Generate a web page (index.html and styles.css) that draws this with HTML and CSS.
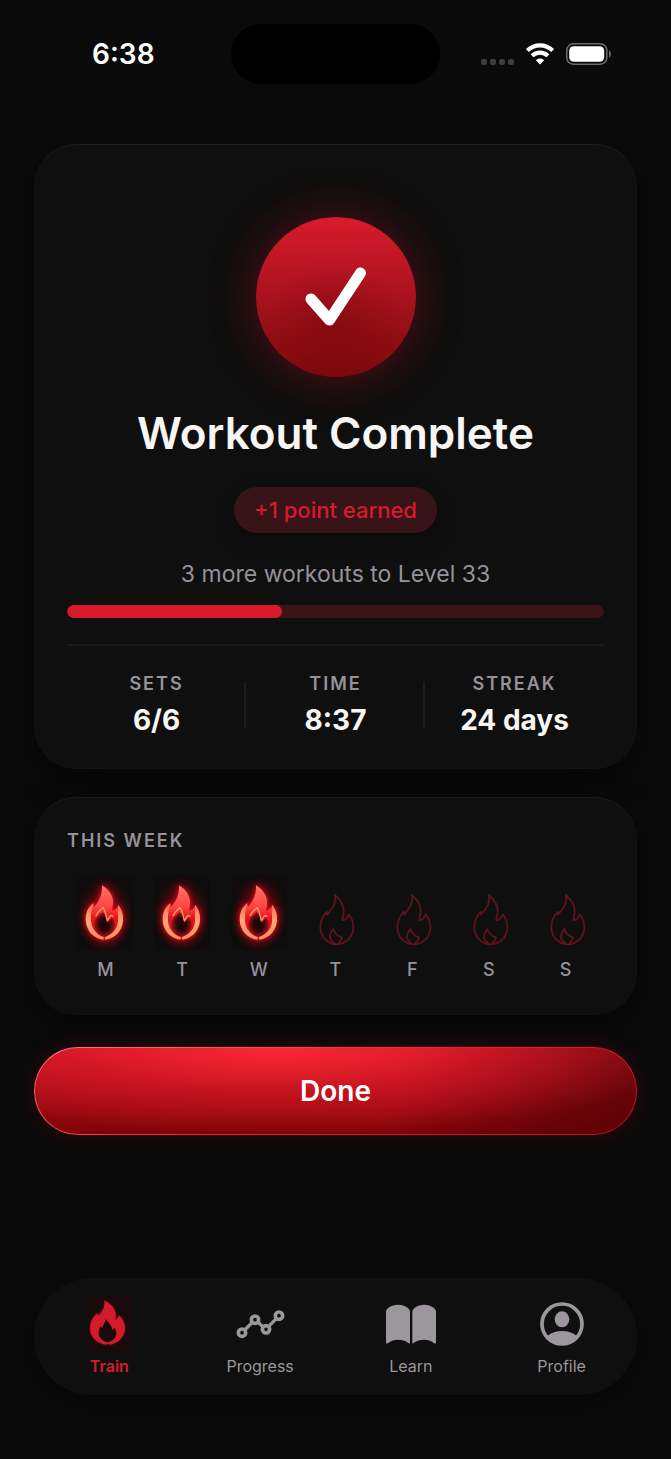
FILE: index.html
```
<!DOCTYPE html>
<html lang="en">
<head>
    <meta charset="UTF-8">
    <meta name="viewport" content="width=device-width, initial-scale=1.0">
    <title>Workout Complete</title>
    <link rel="stylesheet" href="styles.css">
</head>
<body>
    <!-- Shared flame shapes -->
    <svg class="sprite" aria-hidden="true">
        <defs>
            <linearGradient id="flame-fill" x1="0" y1="0" x2="0" y2="1">
                <stop offset="0" stop-color="#ff7466"/>
                <stop offset="0.4" stop-color="#fc4643"/>
                <stop offset="0.6" stop-color="#e3161d"/>
                <stop offset="1" stop-color="#c20d13"/>
            </linearGradient>
            <linearGradient id="flame-edge" x1="0" y1="0" x2="0" y2="1">
                <stop offset="0" stop-color="#ff6a52"/>
                <stop offset="0.5" stop-color="#ffa878"/>
                <stop offset="1" stop-color="#ff8a60"/>
            </linearGradient>
            <radialGradient id="flame-core">
                <stop offset="0" stop-color="#140607"/>
                <stop offset="0.5" stop-color="#2c0709"/>
                <stop offset="1" stop-color="#a01015"/>
            </radialGradient>
        </defs>
        <symbol id="flame-lit" viewBox="0 0 168 222">
            <path fill="url(#flame-fill)" d="M75 28 C95 40 112 62 108 86 C107 94 105 99 105 104 C115 103 122 96 124 87 C132 100 138 112 137 131 C136 164 112 187 82 190 C52 188 28 164 27 131 C27 110 35 94 49 82 L51 94 C62 80 77 62 75 28 Z"/>
            <path fill="url(#flame-core)" d="M76 108 C68 118 52 128 52 146 C52 164 64 177 82 183 C100 177 113 164 113 146 C113 136 109 129 104 126 L92 140 L86 116 Z"/>
            <path fill="url(#flame-edge)" d="M49 82 C33 94 26 110 26 131 C27 164 50 187 79 191 L81 184 C60 176 44 160 42 134 C41 114 44 100 49 82 Z"/>
            <path fill="url(#flame-edge)" d="M124 87 C133 100 139 112 138 131 C137 164 114 187 85 191 L83 184 C106 176 121 160 123 136 C124 118 121 106 124 87 Z"/>
            <path fill="none" stroke="#ff9a70" stroke-width="4" stroke-linecap="round" stroke-linejoin="round" d="M57 119 C62 106 72 102 78 95 L83 103 L91 134 L101 118 L108 121"/>
        </symbol>
        <symbol id="flame-off" viewBox="54 70 114 159">
            <path fill="none" stroke="currentColor" stroke-width="5.5" stroke-linejoin="round" stroke-linecap="round" d="M107 224 C80 222 61 200 61 172 C61 153 69 139 80 126 L81 135 C94 119 110 104 105 76 C121 91 132 105 131 124 C131 136 127 143 127 151 C136 152 143 145 146 134 C155 145 160 156 160 172 C160 200 141 222 112 224 C119 217 126 211 126 203 C119 200 108 201 100 178 C93 188 88 194 90 204 C92 214 99 218 107 224 Z"/>
        </symbol>
    </svg>

    <div class="app">
        <header class="status-bar">
            <time class="clock">6:38</time>
            <div class="island"></div>
            <div class="status-icons">
                <div class="signal"><i></i><i></i><i></i><i></i></div>
                <svg class="wifi" viewBox="0 0 28 22" aria-hidden="true">
                    <g fill="none" stroke="#fff" stroke-width="4.2">
                        <path d="M1.4 7.6 C8.5 0.6 19.5 0.6 26.6 7.6"/>
                        <path d="M6.1 12.7 C10.6 8.5 17.4 8.5 21.9 12.7"/>
                    </g>
                    <path fill="#fff" d="M9.8 17.2 C12.2 15 15.8 15 18.2 17.2 L14 21.6 Z"/>
                </svg>
                <svg class="battery" viewBox="0 0 46 22" aria-hidden="true">
                    <rect x="0.8" y="0.8" width="40" height="20.4" rx="6.5" fill="none" stroke="#6d6d6d" stroke-width="1.5"/>
                    <rect x="3.2" y="3.2" width="35" height="15.6" rx="4.5" fill="#fff"/>
                    <path d="M43 7.5 C45.6 9 45.6 13 43 14.5 Z" fill="#6d6d6d"/>
                </svg>
            </div>
        </header>

        <main class="content">
            <section class="card summary">
                <div class="check-circle">
                    <svg viewBox="0 0 62 60" aria-hidden="true">
                        <path d="M6 32 L24.5 53 L55.5 6" fill="none" stroke="#fff" stroke-width="11" stroke-linecap="round" stroke-linejoin="round"/>
                    </svg>
                </div>
                <h1 class="title">Workout Complete</h1>
                <p class="points">+1 point earned</p>
                <p class="next-level" id="next-level">3 more workouts to Level 33</p>
                <div class="progress" role="progressbar" aria-labelledby="next-level" aria-valuenow="40" aria-valuemin="0" aria-valuemax="100">
                    <div class="progress-fill" style="width: 40%"></div>
                </div>
                <dl class="stats">
                    <div class="stat">
                        <dt>SETS</dt>
                        <dd>6/6</dd>
                    </div>
                    <div class="stat">
                        <dt>TIME</dt>
                        <dd>8:37</dd>
                    </div>
                    <div class="stat">
                        <dt>STREAK</dt>
                        <dd>24 days</dd>
                    </div>
                </dl>
            </section>

            <section class="card week">
                <h2 class="week-title">THIS WEEK</h2>
                <ol class="days">
                    <li class="day"><span class="flame lit"><svg><use href="#flame-lit"/></svg></span>M</li>
                    <li class="day"><span class="flame lit"><svg><use href="#flame-lit"/></svg></span>T</li>
                    <li class="day"><span class="flame lit"><svg><use href="#flame-lit"/></svg></span>W</li>
                    <li class="day"><span class="flame off"><svg><use href="#flame-off"/></svg></span>T</li>
                    <li class="day"><span class="flame off"><svg><use href="#flame-off"/></svg></span>F</li>
                    <li class="day"><span class="flame off"><svg><use href="#flame-off"/></svg></span>S</li>
                    <li class="day"><span class="flame off"><svg><use href="#flame-off"/></svg></span>S</li>
                </ol>
            </section>

            <button class="done" type="button">Done</button>
        </main>

        <nav class="tab-bar">
            <a class="tab active" href="#train">
                <span class="tab-icon train">
                    <svg width="44" height="56" viewBox="201 76 132 168" aria-hidden="true">
                        <path fill="#d51a2b" d="M253 89 C272 100 290 115 287 139 L286 148 C291 146 295 141 298 134 C309 147 315 158 315 174 C314 200 292 219 267 222 L263 218 L259 222 C233 219 211 200 210 174 C210 155 219 140 231 127 L235 135 C245 124 257 112 253 89 Z"/>
                        <path fill="#1c090b" d="M257 145 C256 158 248 164 246 173 L242 167 C237 176 235 184 236 191 C238 203 249 212 263 215 C277 212 287 203 289 191 C289 184 287 177 284 171 L277 178 C275 164 267 157 257 145 Z"/>
                    </svg>
                </span>
                Train
            </a>
            <a class="tab" href="#progress">
                <span class="tab-icon">
                    <svg width="49" height="30" viewBox="645 121 147 90" aria-hidden="true">
                        <g fill="none" stroke="currentColor">
                            <path stroke-width="10" d="M671 184 L694 161 M710 160 L727 175 M742 174 L766 150"/>
                            <g stroke-width="11">
                                <circle cx="663" cy="192" r="11"/>
                                <circle cx="702" cy="153" r="11"/>
                                <circle cx="735" cy="182" r="11"/>
                                <circle cx="774" cy="141" r="11"/>
                            </g>
                        </g>
                    </svg>
                </span>
                Progress
            </a>
            <a class="tab" href="#learn">
                <span class="tab-icon">
                    <svg width="50" height="40" viewBox="168 100 150 120" aria-hidden="true">
                        <path fill="currentColor" d="M168 123 Q168 118 172 114 C188 98 220 98 236 114 Q240 118 240 123 V215 Q240 221 235 217 C218 204 190 204 175 217 Q168 221 168 215 Z"/>
                        <path fill="currentColor" d="M247 123 Q247 118 251 114 C267 98 298 98 314 114 Q318 118 318 123 V215 Q318 221 311 217 C296 204 268 204 251 217 Q247 221 247 215 Z"/>
                    </svg>
                </span>
                Learn
            </a>
            <a class="tab" href="#profile">
                <span class="tab-icon">
                    <svg width="44" height="44" viewBox="0 0 132 132" aria-hidden="true">
                        <circle cx="66" cy="66" r="60" fill="none" stroke="currentColor" stroke-width="11"/>
                        <ellipse cx="66" cy="52" rx="22" ry="24" fill="currentColor"/>
                        <path fill="currentColor" d="M22 102 C44 82 88 82 110 102 C86 134 46 134 22 102 Z"/>
                    </svg>
                </span>
                Profile
            </a>
        </nav>
    </div>
</body>
</html>
```
FILE: styles.css
```
* {
    box-sizing: border-box;
}

body {
    margin: 0;
    background: #0a0a0a;
    color: #f7f6f4;
    font-family: Inter, "Liberation Sans", sans-serif;
}

h1, h2, p, dl, dd, ol {
    margin: 0;
    padding: 0;
}

svg {
    display: block;
}

.sprite {
    position: absolute;
    width: 0;
    height: 0;
}

.app {
    display: flex;
    flex-direction: column;
    min-height: 100vh;
    padding: 24px 34px 64px;
}

/* Status bar */
.status-bar {
    display: grid;
    grid-template-columns: 1fr 209px 1fr;
    align-items: center;
    margin-bottom: 60px;
}

.clock {
    padding-left: 58px;
    color: #fff;
    font-size: 28px;
    font-weight: 600;
}

.island {
    height: 60px;
    border-radius: 30px;
    background: #000;
}

.status-icons {
    display: flex;
    justify-content: flex-end;
    align-items: center;
    gap: 12px;
    padding-right: 25px;
}

.signal {
    display: flex;
    gap: 3px;
    padding-top: 16px;
}

.signal i {
    width: 6px;
    height: 6px;
    border-radius: 2px;
    background: #3e3e3e;
}

.wifi {
    width: 28px;
    height: 22px;
}

.battery {
    width: 46px;
    height: 22px;
}

/* Cards */
.content {
    display: flex;
    flex-direction: column;
    gap: 28px;
    margin-bottom: 40px;
}

.card {
    padding: 32px;
    border: 1px solid #121212;
    border-top-color: #1c1c1c;
    border-radius: 42px;
    background: #0f0f0f;
    box-shadow: 0 10px 32px rgba(0, 0, 0, 0.45);
}

.summary {
    display: flex;
    flex-direction: column;
    align-items: center;
    padding-top: 72px;
    padding-bottom: 28px;
}

.check-circle {
    display: flex;
    justify-content: center;
    align-items: center;
    width: 160px;
    height: 160px;
    border-radius: 50%;
    background:
        radial-gradient(circle at 50% 68%, rgba(110, 5, 10, 0.4), transparent 50%),
        linear-gradient(#d81b2e, #7b090b);
    box-shadow: 0 0 48px rgba(190, 15, 35, 0.34), 0 0 64px rgba(190, 15, 35, 0.08);
}

.check-circle svg {
    width: 62px;
    height: 60px;
}

.title {
    margin-top: 26px;
    font-size: 44px;
    font-weight: 600;
    line-height: 60px;
    text-align: center;
}

.points {
    margin-top: 24px;
    padding: 0 20px;
    border-radius: 23px;
    background: #381317;
    color: #d51b2c;
    font-size: 22px;
    font-weight: 500;
    line-height: 46px;
    box-shadow: 0 8px 20px rgba(0, 0, 0, 0.3);
}

.next-level {
    margin-top: 26px;
    color: #97929a;
    font-size: 23px;
    line-height: 30px;
}

.progress {
    width: 100%;
    height: 13px;
    margin-top: 16px;
    border-radius: 7px;
    background: #3a1418;
    overflow: hidden;
}

.progress-fill {
    height: 100%;
    border-radius: 7px;
    background: #d61a2b;
}

.stats {
    display: grid;
    grid-template-columns: repeat(3, 1fr);
    width: 100%;
    margin-top: 26px;
    padding-top: 26px;
    border-top: 2px solid #191919;
}

.stat {
    display: flex;
    flex-direction: column;
    align-items: center;
    background: linear-gradient(#1b1b1b, #1b1b1b) right 10px / 2px 46px no-repeat;
}

.stat:last-child {
    background: none;
}

.stat dt {
    color: #97929a;
    font-size: 18px;
    font-weight: 600;
    letter-spacing: 2px;
    line-height: 24px;
}

.stat dd {
    font-size: 28px;
    font-weight: 700;
    line-height: 40px;
    margin-top: 4px;
}

/* Week */
.week-title {
    color: #97929a;
    font-size: 18px;
    font-weight: 600;
    letter-spacing: 2px;
    line-height: 22px;
}

.days {
    display: grid;
    grid-template-columns: repeat(7, 1fr);
    margin-top: 24px;
    list-style: none;
}

.day {
    display: flex;
    flex-direction: column;
    align-items: center;
    gap: 8px;
    color: #97929a;
    font-size: 18px;
    font-weight: 500;
    line-height: 24px;
}

.flame {
    display: flex;
    justify-content: center;
    align-items: flex-end;
    height: 74px;
}

.lit {
    width: 56px;
    background: radial-gradient(ellipse at 50% 52%, #4a080b 30%, #0e0c0c 72%);
}

.lit svg {
    width: 56px;
    height: 74px;
    filter: drop-shadow(0 0 2px rgba(235, 15, 25, 0.9)) drop-shadow(0 0 4px rgba(210, 10, 18, 0.7));
}

.off {
    padding: 0 0 4px 4px;
    color: #5b141c;
}

.off svg {
    width: 38px;
    height: 53px;
}

/* Done button */
.done {
    height: 88px;
    margin-top: 4px;
    border: 1px solid transparent;
    border-radius: 44px;
    background:
        radial-gradient(ellipse 70% 100% at 40% 0%, rgba(255, 42, 54, 0.9), rgba(240, 28, 42, 0.45) 50%, transparent) padding-box,
        linear-gradient(100deg, transparent 60%, rgba(70, 0, 4, 0.7)) padding-box,
        linear-gradient(#c81626, #800308) padding-box,
        linear-gradient(160deg, #ff7c82, #f01c2d 50%, #c00a18) border-box;
    box-shadow: 0 0 20px rgba(190, 10, 25, 0.2);
    color: #fff;
    font: 600 28px/36px Inter, "Liberation Sans", sans-serif;
    cursor: pointer;
}

/* Tab bar */
.tab-bar {
    display: grid;
    grid-template-columns: repeat(4, 1fr);
    margin-top: auto;
    padding: 18px 0;
    border-radius: 58px;
    background: #0f0f0f;
    box-shadow: 0 8px 28px rgba(0, 0, 0, 0.4);
}

.tab {
    display: flex;
    flex-direction: column;
    align-items: center;
    gap: 4px;
    color: #9c969d;
    font-size: 16px;
    line-height: 21px;
    text-decoration: none;
}

.tab.active {
    color: #d51a2b;
    font-weight: 600;
}

.tab-icon {
    display: flex;
    justify-content: center;
    align-items: center;
    height: 56px;
}

.train {
    background: #190a0b;
}

.train svg {
    filter: drop-shadow(0 0 1px rgba(213, 26, 43, 0.5));
}
```
